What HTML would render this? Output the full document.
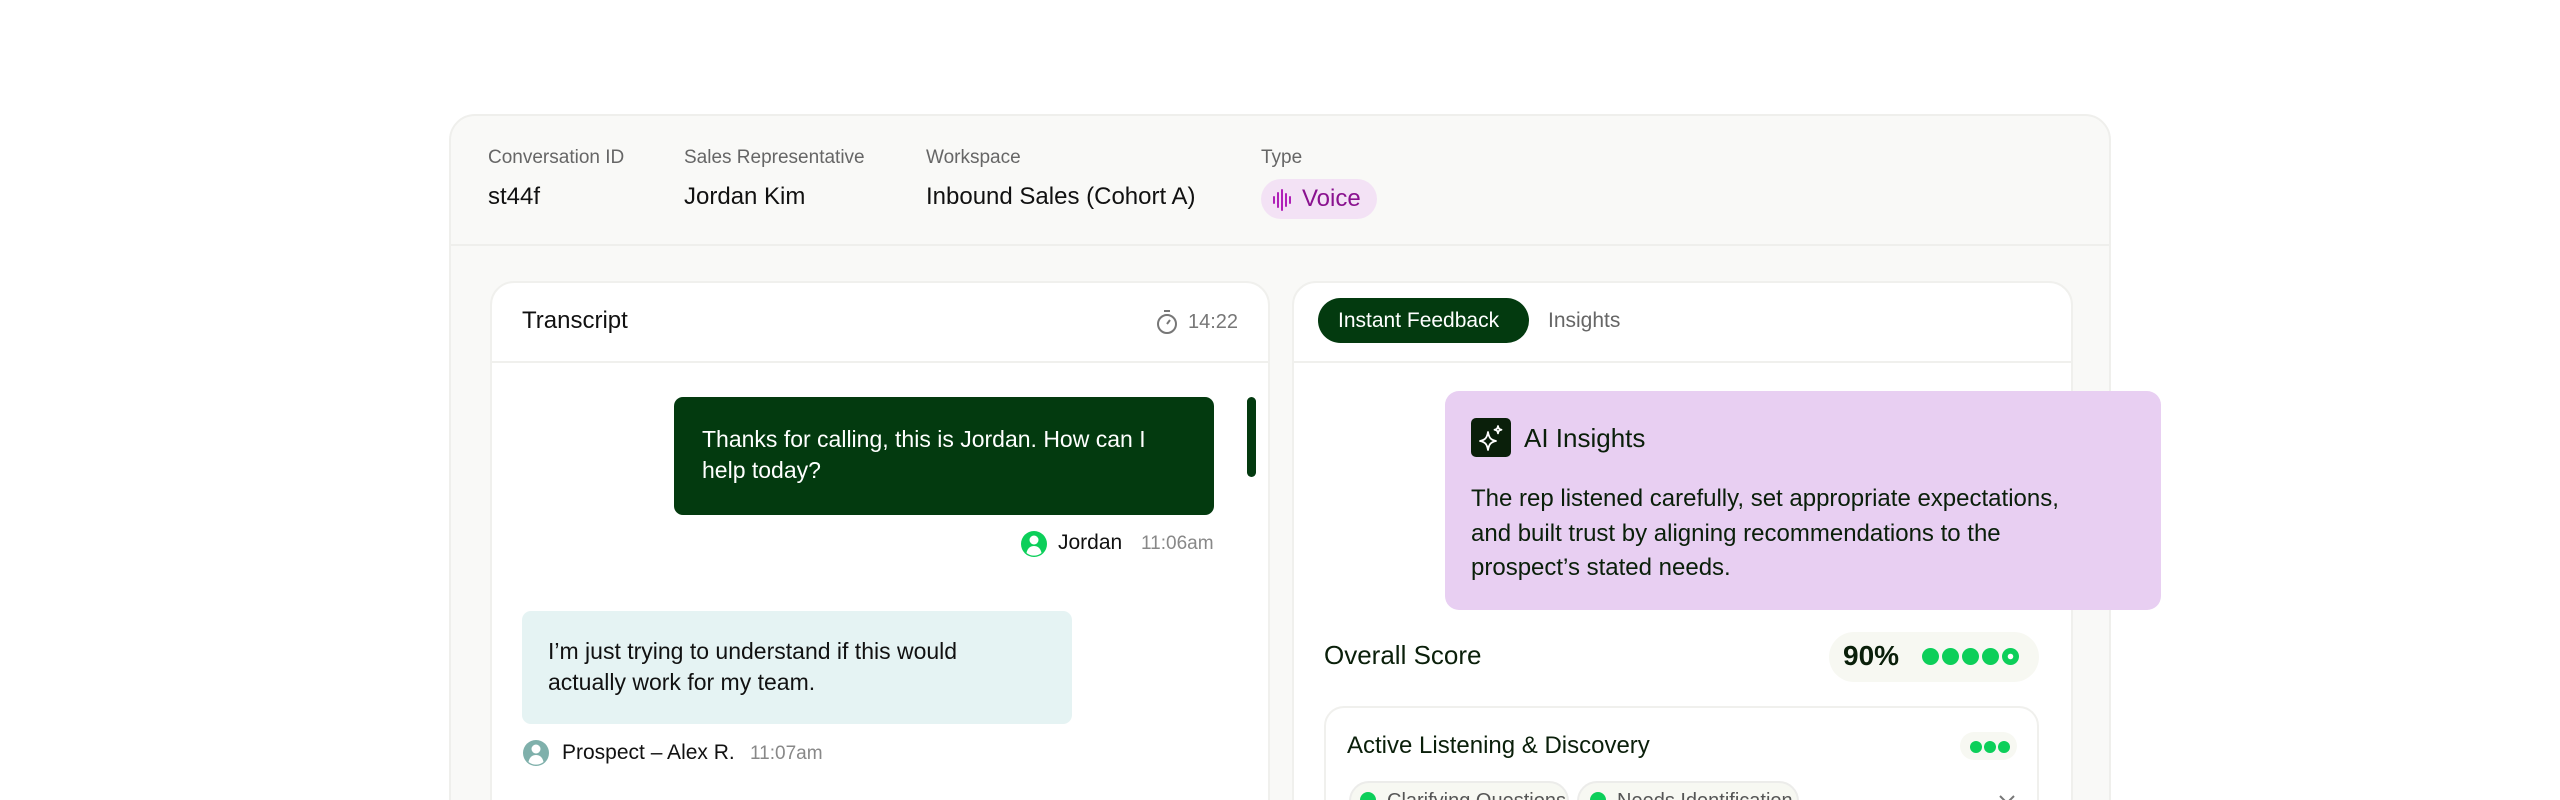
<!DOCTYPE html>
<html><head><meta charset="utf-8"><style>
*{box-sizing:border-box;margin:0;padding:0}
html,body{width:2560px;height:800px;overflow:hidden}
body{background:#fff;font-family:"Liberation Sans",Arial,sans-serif;color:#0f1f0f;position:relative}
.a{position:absolute;white-space:nowrap}
.outer{position:absolute;left:449px;top:114px;width:1662px;height:720px;background:#f9f9f7;border:2px solid #efefec;border-radius:26px}
.lbl{font-size:19px;color:#666}
.val{font-size:24px;color:#111}
.panel{position:absolute;background:#fff;border:2px solid #f0f0ed;border-radius:24px}
.dot{display:inline-block;width:17px;height:17px;border-radius:50%;background:#0ccf5a;margin-right:3px}
</style></head><body>
<div class="outer"></div>
<div class="a lbl" style="left:488px;top:147px">Conversation ID</div>
<div class="a lbl" style="left:684px;top:147px">Sales Representative</div>
<div class="a lbl" style="left:926px;top:147px">Workspace</div>
<div class="a lbl" style="left:1261px;top:147px">Type</div>
<div class="a val" style="left:488px;top:183px">st44f</div>
<div class="a val" style="left:684px;top:183px">Jordan Kim</div>
<div class="a val" style="left:926px;top:183px">Inbound Sales (Cohort A)</div>
<div class="a" style="left:1261px;top:179px;width:116px;height:40px;border-radius:20px;background:#f3e2f5"></div>
<svg class="a" style="left:1272px;top:189px" width="20" height="22" viewBox="0 0 20 22"><g stroke="#b020b8" stroke-width="2" stroke-linecap="round"><line x1="2" y1="8" x2="2" y2="14"/><line x1="6" y1="4" x2="6" y2="18"/><line x1="10" y1="1" x2="10" y2="21"/><line x1="14" y1="5" x2="14" y2="17"/><line x1="18" y1="8" x2="18" y2="14"/></g></svg>
<div class="a" style="left:1302px;top:185px;font-size:24px;color:#8a128f">Voice</div>
<div class="a" style="left:449px;top:244px;width:1662px;height:2px;background:#efefec"></div>

<div class="panel" style="left:490px;top:281px;width:780px;height:600px"></div>
<div class="a" style="left:492px;top:361px;width:776px;height:2px;background:#f0f0ed"></div>
<div class="a" style="left:522px;top:307px;font-size:24px;color:#111">Transcript</div>
<svg class="a" style="left:1156px;top:309px" width="22" height="26" viewBox="0 0 22 26"><g fill="none" stroke="#777" stroke-width="2"><circle cx="11" cy="15" r="9"/><line x1="8" y1="2" x2="14" y2="2"/><line x1="11" y1="15" x2="14" y2="11"/></g></svg>
<div class="a" style="left:1188px;top:311px;font-size:20px;color:#777">14:22</div>

<div class="a" style="left:674px;top:397px;width:540px;height:118px;background:#033a0f;border-radius:9px"></div>
<div class="a" style="left:702px;top:424px;font-size:23px;line-height:31px;color:#fff">Thanks for calling, this is Jordan. How can I<br>help today?</div>
<div class="a" style="left:1247px;top:397px;width:9px;height:80px;border-radius:5px;background:#033a0f"></div>
<svg class="a" style="left:1020px;top:530px" width="28" height="28" viewBox="0 0 28 28"><circle cx="14" cy="14" r="13" fill="#0ccf5a"/><circle cx="14" cy="10" r="4.5" fill="#fff"/><path d="M6.5 23c1-5 4-7 7.5-7s6.5 2 7.5 7a12 12 0 0 1-15 0z" fill="#fff"/></svg>
<div class="a" style="left:1058px;top:531px;font-size:21px;color:#111">Jordan</div>
<div class="a" style="left:1141px;top:533px;font-size:19px;color:#888">11:06am</div>

<div class="a" style="left:522px;top:611px;width:550px;height:113px;background:#e5f3f3;border-radius:9px"></div>
<div class="a" style="left:548px;top:636px;font-size:23px;line-height:31px;color:#111">I’m just trying to understand if this would<br>actually work for my team.</div>
<svg class="a" style="left:522px;top:739px" width="28" height="28" viewBox="0 0 28 28"><circle cx="14" cy="14" r="13" fill="#7fb0ab"/><circle cx="14" cy="10" r="4.5" fill="#fff"/><path d="M6.5 23c1-5 4-7 7.5-7s6.5 2 7.5 7a12 12 0 0 1-15 0z" fill="#fff"/></svg>
<div class="a" style="left:562px;top:741px;font-size:21px;color:#111">Prospect – Alex R.</div>
<div class="a" style="left:750px;top:743px;font-size:19px;color:#888">11:07am</div>

<div class="panel" style="left:1292px;top:281px;width:781px;height:600px"></div>
<div class="a" style="left:1294px;top:361px;width:777px;height:2px;background:#f0f0ed"></div>
<div class="a" style="left:1318px;top:298px;width:211px;height:45px;border-radius:23px;background:#033a0f"></div>
<div class="a" style="left:1338px;top:309px;font-size:21px;color:#fff">Instant Feedback</div>
<div class="a" style="left:1548px;top:309px;font-size:21px;color:#666">Insights</div>

<div class="a" style="left:1445px;top:391px;width:716px;height:219px;background:#e8cff2;border-radius:14px"></div>
<div class="a" style="left:1471px;top:418px;width:40px;height:39px;border-radius:5px;background:#0a1f0a"></div>
<svg class="a" style="left:1471px;top:418px" width="40" height="39" viewBox="0 0 40 39"><g fill="none" stroke="#fff" stroke-width="1.8" stroke-linejoin="round"><path d="M17 14c1 6 3 8 8 9-5 1-7 3-8 9-1-6-3-8-8-9 5-1 7-3 8-9z"/><path d="M27 8c.4 2.5 1.2 3.3 3.5 3.7-2.3.4-3.1 1.2-3.5 3.7-.4-2.5-1.2-3.3-3.5-3.7 2.3-.4 3.1-1.2 3.5-3.7z"/></g></svg>
<div class="a" style="left:1524px;top:423px;font-size:26px;color:#0a1f0a">AI Insights</div>
<div class="a" style="left:1471px;top:482px;font-size:24px;line-height:34.5px;color:#0a1f0a">The rep listened carefully, set appropriate expectations,<br>and built trust by aligning recommendations to the<br>prospect’s stated needs.</div>

<div class="a" style="left:1324px;top:640px;font-size:26px;color:#0a1f0a">Overall Score</div>
<div class="a" style="left:1829px;top:632px;width:210px;height:50px;border-radius:25px;background:#f7f8f2"></div>
<div class="a" style="left:1843px;top:640px;font-size:28px;font-weight:bold;color:#0a1f0a">90%</div>
<div class="a" style="left:1922px;top:648px"><span class="dot"></span><span class="dot"></span><span class="dot"></span><span class="dot"></span><span class="dot" style="background:radial-gradient(circle,#fff 0 2.5px,#0ccf5a 3px)"></span></div>

<div class="a" style="left:1324px;top:706px;width:715px;height:200px;border:2px solid #f0f0ed;border-radius:20px;background:#fff"></div>
<div class="a" style="left:1347px;top:732px;font-size:24px;color:#0a1f0a">Active Listening &amp; Discovery</div>
<div class="a" style="left:1960px;top:732px;width:57px;height:28px;border-radius:14px;background:#f7f8f2"></div>
<div class="a" style="left:1970px;top:740px"><span class="dot" style="width:12px;height:12px;margin-right:2px"></span><span class="dot" style="width:12px;height:12px;margin-right:2px"></span><span class="dot" style="width:12px;height:12px"></span></div>
<div class="a" style="left:1349px;top:781px;width:220px;height:40px;border:2px solid #ececea;border-radius:20px;background:#f7f8f2"></div>
<div class="a" style="left:1577px;top:781px;width:222px;height:40px;border:2px solid #ececea;border-radius:20px;background:#f7f8f2"></div>
<div class="a" style="left:1360px;top:792px;width:16px;height:16px;border-radius:50%;background:#0ccf5a"></div>
<div class="a" style="left:1590px;top:792px;width:16px;height:16px;border-radius:50%;background:#0ccf5a"></div>
<div class="a" style="left:1387px;top:790px;font-size:20px;color:#555">Clarifying Questions</div>
<div class="a" style="left:1617px;top:790px;font-size:20px;color:#555">Needs Identification</div>
<svg class="a" style="left:1998px;top:794px" width="18" height="12" viewBox="0 0 18 12"><path d="M2 2l7 7 7-7" fill="none" stroke="#777" stroke-width="2"/></svg>
</body></html>
